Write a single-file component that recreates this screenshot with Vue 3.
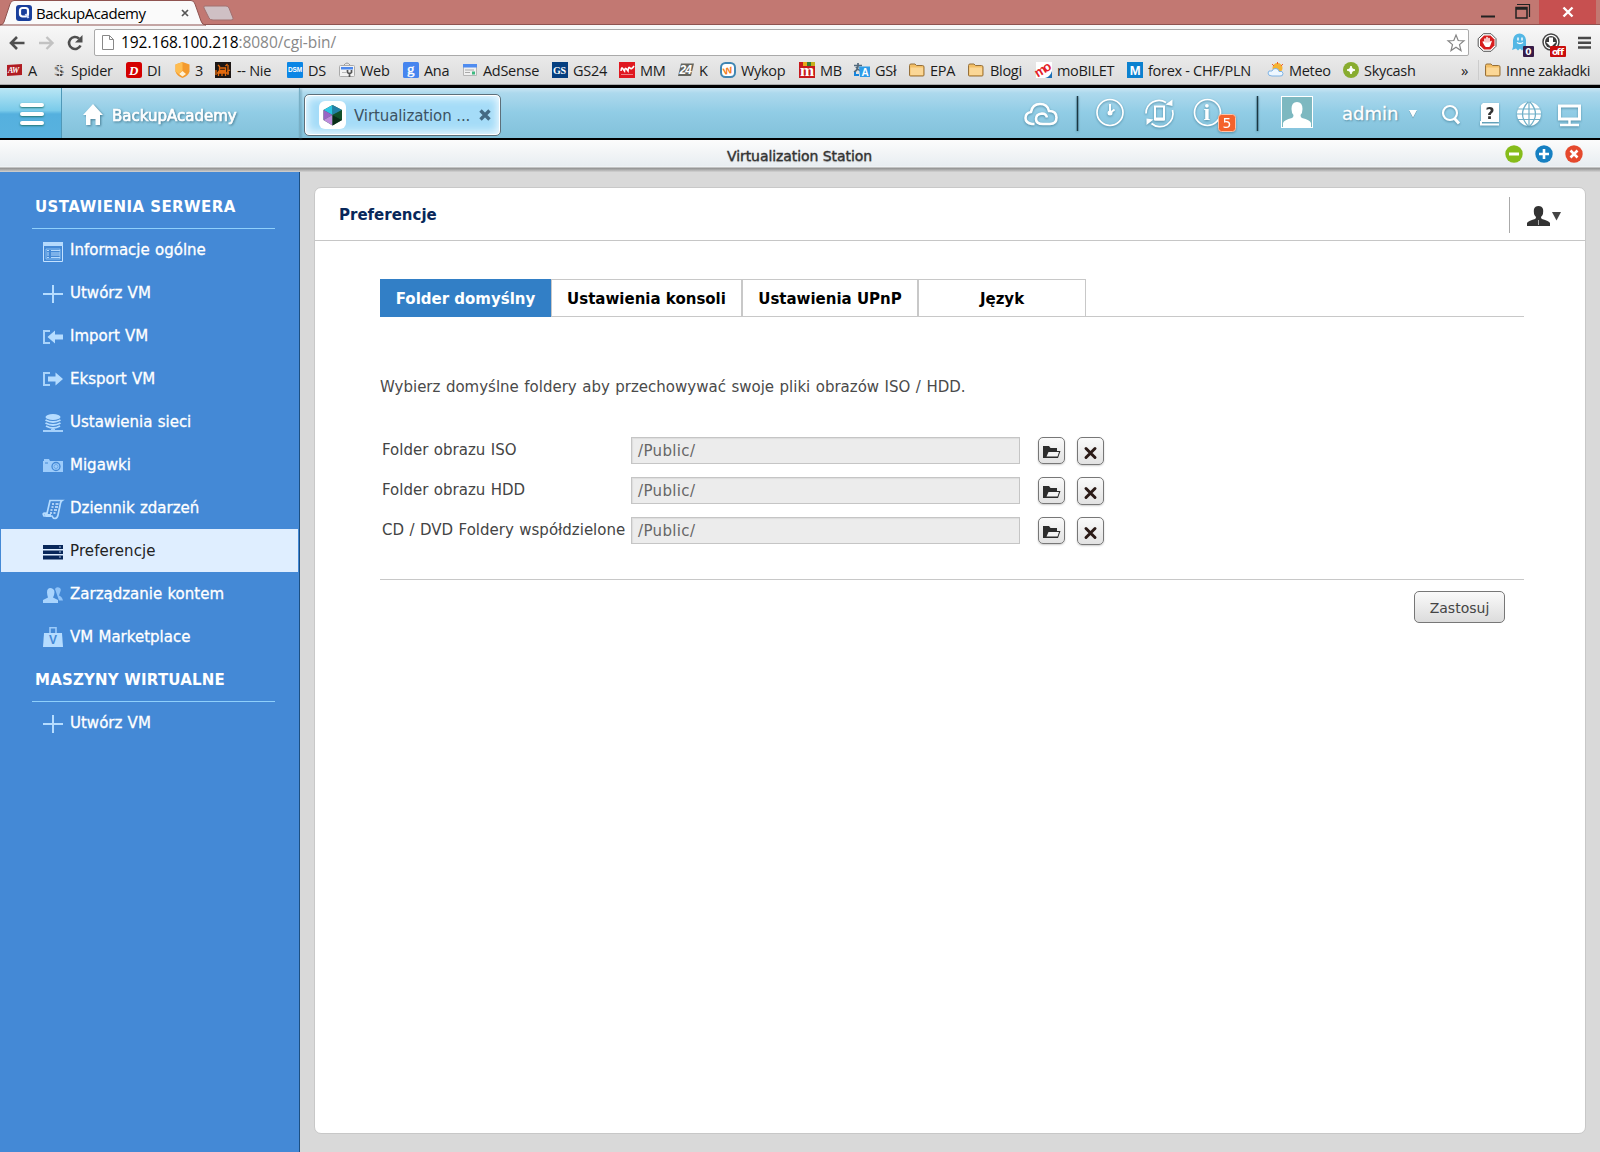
<script setup>
const folder = '<path d="M.5 3.500q0-1.500 1.500-1.500h4l1.500 1.500h6q1.500 0 1.500 1.500v8q0 1-1 1h-12.500q-1 0-1-1z" fill="#f3bf66" stroke="#96703a"/><path d="M1.500 5.500h12.500v7.500h-12.500z" fill="#fbd796"/>'

const bookmarks = [
  { label: 'A', w: 45, gap: 5, art: '<path d="M0 3l15-1v11l-15 1z" fill="#b01c22"/><text x="1" y="11" font-size="8" font-weight="700" font-style="italic" font-family="Liberation Serif" fill="#fff" letter-spacing="-.5">AW</text>' },
  { label: 'Spider', w: 74, gap: 3, art: '<text x="2" y="14" font-size="17" font-weight="700" font-family="Liberation Mono" fill="#444">S</text><path d="M0 4.500h13M0 8h13M0 11.500h13M4 0v16M7.500 0v16M11 0v16" stroke="#e3e3e3" stroke-width=".8"/>' },
  { label: 'DI', w: 49, gap: 5, art: '<rect width="16" height="16" rx="2.500" fill="#d40000"/><text x="3" y="13" font-size="13" font-weight="700" font-style="italic" font-family="Liberation Serif" fill="#fff">D</text>' },
  { label: '3', w: 40, gap: 4, art: '<path d="M7.500 0l7 2.500v7q-1 4-7 6.500q-6-2.500-7-6.500v-7z" fill="#f39a2d"/><path d="M7.500 0l-7 2.500v7l3 2.500 4-3.500z" fill="#ffbd50"/><path d="M4 12l3.500-3 3.500 3-3.500 2.500z" fill="#fff2d6"/>' },
  { label: '-- Nie', w: 72, gap: 6, art: '<rect width="16" height="16" fill="#1d1715"/><path d="M1 13V8M3.500 14V9.500h7V14M13 13V3M15 8l-3 1.500M4.500 6h6v2.500h-6zM3 3l2 2M10.500 4l2-2M7 9v5M2 11h12" fill="none" stroke="#e46a0d" stroke-width="1.300"/>' },
  { label: 'DS', w: 52, gap: 5, art: '<rect width="16" height="16" rx="1" fill="#0b86e5"/><text x="1" y="10" font-size="6.500" font-weight="700" font-family="Liberation Sans" fill="#fff" letter-spacing="-.2">DSM</text>' },
  { label: 'Web', w: 64, gap: 5, art: '<path d="M5 3q3-4 6 0" fill="none" stroke="#999"/><rect x=".5" y="3.500" width="15" height="11" rx="1" fill="#f3f3f3" stroke="#aaa"/><path d="M2 5h12v2.500H2z" fill="#4d88ec"/><path d="M3 10h4v1H3z" fill="#bbb"/><path d="M8.500 8v2.500q2 2 4 0V8M10.500 11.500V15" fill="none" stroke="#555" stroke-width="1.700"/>' },
  { label: 'Ana', w: 60, gap: 5, art: '<rect width="16" height="16" rx="1.500" fill="#4685ef"/><text x="4" y="12" font-size="15" font-family="Liberation Serif" fill="#fff" stroke="#fff" stroke-width=".4">g</text>' },
  { label: 'AdSense', w: 89, gap: 4, art: '<path d="M.5 2.500h13v11H.5z" fill="#f0f0f0" stroke="#b5b5b5"/><path d="M0 2h14v3.500H0z" fill="#4f8cf0"/><path d="M2 8h9M2 10.500h5" stroke="#aaa"/><path d="M9 9.500h3v3H9z" fill="#3db980"/>' },
  { label: 'GS24', w: 67, gap: 5, art: '<rect width="16" height="16" fill="#053f80"/><text x="1" y="12" font-size="10" font-weight="700" font-family="Liberation Serif" fill="#fff">GS</text>' },
  { label: 'MM', w: 59, gap: 5, art: '<rect width="16" height="16" fill="#e01820"/><path d="M2 9q.5-5 2-2l1.500 2q.5-4 2-2L9 9q.5-5 2-3t4-2" fill="none" stroke="#fff" stroke-width="1.600"/><path d="M2 12.500h12" stroke="#ee8084"/>' },
  { label: 'K', w: 42, gap: 5, art: '<path d="M3 1.500h13l-3 12.500H0z" fill="#66665f"/><text x="1.500" y="12" font-size="12" font-weight="700" font-style="italic" font-family="Liberation Sans" fill="#fff" letter-spacing="-1">24</text>' },
  { label: 'Wykop', w: 79, gap: 5, art: '<rect x="1" y="1" width="14" height="14" rx="4.500" fill="#fff" stroke="#4086b3" stroke-width="2"/><text x="3" y="12" font-size="12" font-weight="700" font-family="Liberation Sans" fill="#f47e22" transform="rotate(-14 8 8)">w</text>' },
  { label: 'MB', w: 55, gap: 5, art: '<rect width="16" height="16" fill="#c7191c"/><path d="M4 0h4v4H4z" fill="#e8a719"/><path d="M8 0h4v4H8z" fill="#327b35"/><path d="M12 0h4v4h-4z" fill="#c5b01d"/><text x="1" y="14" font-size="17" font-weight="700" font-family="Liberation Serif" fill="#fff">m</text>' },
  { label: 'GSł', w: 55, gap: 5, art: '<path d="M0 3.500h8M4 1v3q0 4-4 6M2 5q2 3 5 4" fill="none" stroke="#51687b" stroke-width="1.700"/><path d="M5 4.500h11V15H6z" fill="#2d9be8"/><path d="M1 10v3h4" fill="none" stroke="#1785dc" stroke-width="2"/><text x="7.500" y="13.500" font-size="10" font-weight="700" font-family="Liberation Sans" fill="#fff">A</text>' },
  { label: 'EPA', w: 59, gap: 5, art: folder },
  { label: 'Blogi', w: 68, gap: 6, art: folder },
  { label: 'moBILET', w: 91, gap: 5, art: '<rect width="16" height="16" fill="#fff"/><path d="M16 9v7H9q5-1 7-7z" fill="#1b70b6"/><text x="0" y="14" font-size="13" font-weight="700" font-family="Liberation Sans" fill="#e41e28" letter-spacing="-2" transform="rotate(-32 4 12)">mo</text>' },
  { label: 'forex - CHF/PLN', w: 141, gap: 5, art: '<rect width="16" height="16" fill="#0b81cf"/><text x="2.700" y="12.500" font-size="13" font-weight="700" font-family="Liberation Sans" fill="#fff">M</text>' },
  { label: 'Meteo', w: 75, gap: 5, art: '<circle cx="9.500" cy="6" r="5" fill="#f5b332"/><path d="M9.500 0v2M4 2l2 2M15 2l-2 2" stroke="#ee5c2b"/><path d="M4 14q-4 0-4-3t4-2q1-3 4-2.500t3 3q4-1 4 2t-3 2.500z" fill="#eef7ff" stroke="#7eb3e5"/>' },
  { label: 'Skycash', w: 75, gap: 5, art: '<circle cx="8" cy="8" r="8" fill="#88ac2f"/><path d="M8 4l1.200 2.800L12 8 9.200 9.200 8 12 6.800 9.200 4 8l2.800-1.200z" fill="#fff" stroke="#fff"/>' },
]

const plus = '<path d="M10 1v18M0 10h20" stroke="#b5dcff" stroke-width="2"/>'
const menu = [
  { label: 'Informacje ogólne', dy: 2, art: '<path d="M.5.5h19v19H.5z" fill="none" stroke="#c4e2ff"/><path d="M0 0h20v4H0z" fill="#b5dafd"/><path d="M3 7h14v10H3z" fill="none" stroke="#a3d3fa" stroke-width=".7"/><path d="M4 8.500h2m2 0h9M4 11h2m2 0h9M4 13h2m2 0h9M4 15.500h2m2 0h9" stroke="#b5dafd"/>' },
  { label: 'Utwórz VM', dy: 1, art: plus },
  { label: 'Import VM', dy: 1, art: '<path d="M7 4H1v12h6" fill="none" stroke="#a9d3fa" stroke-width="2"/><path d="M4.500 10L12 3.500V7.500h8v5h-8v4z" fill="#b5dcff"/>' },
  { label: 'Eksport VM', dy: 0, art: '<path d="M7 4H1v12h6" fill="none" stroke="#a9d3fa" stroke-width="2"/><path d="M20 10l-7.500-6.500v4H5v5h7.500v4z" fill="#b5dcff"/>' },
  { label: 'Ustawienia sieci', dy: 1, art: '<ellipse cx="10" cy="4" rx="7.500" ry="3" fill="#b5dcff"/><path d="M2.500 7q7.500 4 15 0M2.500 10q7.500 4 15 0M3 13q7 4 14 0" fill="none" stroke="#b5dcff" stroke-width="1.900"/><path d="M0 18h20M8 17h4" stroke="#a5d0fa" stroke-width="1.800"/>' },
  { label: 'Migawki', dy: 0, art: '<path d="M1 4h5l1 2h13v11H0V6h1z" fill="#9dccfb"/><circle cx="13" cy="11.500" r="4" fill="none" stroke="#4489d6" stroke-width="1.300"/><circle cx="13" cy="11.500" r="2" fill="none" stroke="#6ba8e7"/><path d="M2 8h3" stroke="#4489d6"/>' },
  { label: 'Dziennik zdarzeń', dy: 1, art: '<path d="M7 1.500h12q-1.500 1-2 5L15 16q-.5 3-3 3.500-2 0-3-2.500l-8 0q-2-3 1-3l2 .5z" fill="none" stroke="#b5dcff" stroke-width="1.700"/><path d="M9 5h2m1.500 0h3M8.500 8h2m1.500 0h3M7.500 11h2m1.500 0h3M7 14h2m1.500 0h2" stroke="#cfe7ff" stroke-width="1.700"/><path d="M1 15h7v3H3z" fill="#b5dcff"/>' },
  { label: 'Preferencje', active: true, dy: 1, art: '<path d="M0 3h20v4H0zM0 8.500h20v3.500H0zM0 13.500h20v4H0z" fill="#08275a"/><path d="M16 5h2M16 10h2M16 15h2" stroke="#a7c0df" stroke-width="1.200"/>' },
  { label: 'Zarządzanie kontem', dy: 1, art: '<path d="M12 4q1-2.500 4-1.500t1 5l-1 3q3 1 4 5h-4z" fill="#8fc3f8"/><path d="M0 18v-3l5-2.500Q3 6 5 4t5 0 0 8.500l5 2.500v3z" fill="#a9d4fd"/>' },
  { label: 'VM Marketplace', dy: 0, art: '<path d="M7 6V.8h6V6" fill="none" stroke="#9ccbfa" stroke-width="1.600"/><path d="M1 6h18l1 14H0z" fill="#b5dcff"/><text x="6" y="17" font-size="12" font-weight="700" font-family="Liberation Sans" fill="#4489d6">V</text>' },
]
const tabs = [
  { label: 'Folder domyślny', w: 172, active: true },
  { label: 'Ustawienia konsoli', w: 190 },
  { label: 'Ustawienia UPnP', w: 176 },
  { label: 'Język', w: 168 },
]
const folders = ['Folder obrazu ISO', 'Folder obrazu HDD', 'CD / DVD Foldery współdzielone']
</script>

<template>
  <div class="screen">
    <header class="titlebar">
      <svg class="tabshape" width="236" height="25" viewBox="0 0 236 25">
        <path d="M0 25q3 0 4-3L10 4q1-3.500 4-3.500h177q3 0 4 3.500l6 17q1 4 5 4z" fill="#fafafa" stroke="#8f5350" />
        <path d="M205 6h21q2 0 3 2l4 10q1 2-2 2h-18q-3 0-4-2l-5-10q-1-2 1-2z" fill="#cfc0c4" stroke="#a2706f" />
      </svg>
      <div class="browsertab">
        <svg width="16" height="16" viewBox="0 0 16 16"><rect width="16" height="16" rx="3" fill="#193f9c" /><rect x="4" y="3" width="8" height="8.500" rx="2.500" fill="none" stroke="#fff" stroke-width="2.200" /><path d="M9.500 9l3 4" stroke="#d3e0ff" stroke-width="2" /></svg>
        <span class="ui tabname">BackupAcademy</span>
        <svg width="8" height="8" viewBox="0 0 8 8"><path d="M1 1l6 6M7 1L1 7" stroke="#555" stroke-width="1.700" /></svg>
      </div>
      <div class="winctl">
        <svg width="60" height="24" viewBox="0 0 60 24"><path d="M0 16.500h14" stroke="#222" stroke-width="2" /><path d="M35 7.500h11v10.500H35zM35 9h11" fill="none" stroke="#222" stroke-width="1.500" /><path d="M36 4.500h12.500V17" fill="none" stroke="#222" stroke-width="1.200" /></svg>
        <div class="winclose"><svg width="12" height="10" viewBox="0 0 12 10"><path d="M1.500.5l9 9m0-9l-9 9" stroke="#fff" stroke-width="2.400" /></svg></div>
      </div>
    </header>

    <div class="toolbar">
      <svg class="nav" width="76" height="20" viewBox="0 0 76 20">
        <path d="M15.500 10H2.500M8 4L2 10l6 6" fill="none" stroke="#4e4e4e" stroke-width="2.600" />
        <path d="M30 10h13M37.500 4l6 6-6 6" fill="none" stroke="#c2c2c2" stroke-width="2.400" />
        <path d="M71.500 12.500A6 6 0 1 1 70 5.500" fill="none" stroke="#4e4e4e" stroke-width="2.600" /><path d="M73.500 2v7.500H66z" fill="#4e4e4e" />
      </svg>
      <div class="address">
        <svg width="12" height="15" viewBox="0 0 12 15"><path d="M.5.5h7l4 4v10H.5zM7.500.5v4h4" fill="#fff" stroke="#888" /></svg>
        <span class="ui url">192.168.100.218<i>:8080/cgi-bin/</i></span>
        <svg class="star" width="18" height="18" viewBox="0 0 18 18"><path d="M9 1l2.200 5.500 5.800.3-4.500 3.800 1.500 6L9 13.300l-5 3.300 1.500-6L1 6.800l5.800-.3z" fill="#fff" stroke="#858585" stroke-width="1.200" /></svg>
      </div>
      <svg class="exts" width="116" height="28" viewBox="0 0 116 28">
        <path d="M6.500.7h7.500l5 5v7.600l-5 5H6.500l-5.300-5V5.700z" fill="#fff" stroke="#555" /><path d="M7 2.500h6.500l4 4v6l-4 4H7l-4-4v-6z" fill="#d71c1c" /><path d="M8 6v5M10 4.500v6M12 5.500v5M6.300 9l2 3.500M14 8.500l-1.500 4" stroke="#fff" stroke-width="1.500" stroke-linecap="round" /><path d="M7.500 9.500h6L12.500 14h-4z" fill="#fff" />
        <path d="M35 17l1-3V7q1-6.500 6.500-6.500T49 7v10l-2-1.500-2 2-2-2-2 2-2-2z" fill="#53b7e5" /><path d="M41 4.500v3m4-3v3m-5 2q3 2 6 0" stroke="#fff" stroke-width="1.500" fill="none" />
        <rect x="46" y="13" width="11" height="11" rx="1" fill="#371b47" /><text x="48.300" y="22" font-family="DejaVu Sans" font-size="9" font-weight="700" fill="#fff">0</text>
        <circle cx="74" cy="9" r="8" fill="#fff" stroke="#444" stroke-width="1.500" /><circle cx="74" cy="9" r="6" fill="#3b3b3b" /><path d="M72 4.500h4V9h3l-5 5-5-5h3z" fill="#fff" />
        <rect x="73" y="13" width="16" height="11" rx="1" fill="#c90d0d" /><text x="75" y="21.500" font-family="DejaVu Sans" font-size="9" font-weight="700" fill="#fff" textLength="12">off</text>
        <path d="M101 5h13M101 9.700h13M101 14.500h13" stroke="#484848" stroke-width="2.600" />
      </svg>
    </div>

    <div class="bookmarks ui">
      <div v-for="b in bookmarks" :key="b.label" class="bm" :style="{ width: b.w + 'px', gap: b.gap + 'px' }">
        <svg width="16" height="16" viewBox="0 0 16 16" v-html="b.art" /><span>{{ b.label }}</span>
      </div>
      <span class="more">»</span>
      <div class="bm other"><svg width="16" height="16" viewBox="0 0 16 16" v-html="folder" /><span>Inne zakładki</span></div>
    </div>

    <div class="qbar">
      <div class="burger"><i /><i /><i /></div>
      <div class="home">
        <svg width="20" height="22" viewBox="0 0 20 22"><path d="M10 0l10 11h-3v10h-4.500v-6h-5v6H3V11H0z" fill="#fff" /></svg>
        <b>BackupAcademy</b>
      </div>
      <div class="apptab">
        <svg width="27" height="28" viewBox="0 0 27 28"><rect width="27" height="28" rx="6" fill="#fff" /><path d="M13.500 4L23 9v10l-9.500 5.500L4.500 19V9z" fill="#276848" /><path d="M13.500 4L4.500 9l9 5z" fill="#2cc4e4" /><path d="M13.500 4L23 9l-9.500 5z" fill="#2380a8" /><path d="M4.500 9v10l9-5z" fill="#9864c5" /><path d="M4.500 19l9 5.500V14z" fill="#bd8bdc" /><path d="M23 9v10l-9.500-5z" fill="#12512b" /><path d="M13.500 14v10.500L23 19z" fill="#092d19" /></svg>
        <span>Virtualization ...</span>
        <svg class="appx" width="12" height="12" viewBox="0 0 12 12"><path d="M1.500 1.500l9 9m0-9l-9 9" stroke="#456a83" stroke-width="3.400" /></svg>
      </div>
      <div class="tray">
        <svg class="sh" width="240" height="44" viewBox="0 0 240 44">
          <path d="M10.500 28H8Q1.500 27 1.500 22t5.500-6q1.500-8 9-8t9 7q7.500 0 7.500 6.500T26 28h-7q-7 0-7-5t6-5.500q4 0 5 4" fill="none" stroke="#fff" stroke-width="2.600" />
          <path d="M53.500 0v35" stroke="#1b3742" stroke-width="1.500" />
          <circle cx="86" cy="16.500" r="13" fill="none" stroke="#fff" stroke-width="1.700" /><path d="M86 8v9l4.500-3.500" fill="none" stroke="#fff" stroke-width="2" /><circle cx="86" cy="17" r="2.500" fill="#fff" />
          <path d="M122 17.500a13 13 0 0 1 20-11M148.500 14a13 13 0 0 1-21 13.500" fill="none" stroke="#fff" stroke-width="1.700" /><path d="M148.500 3.500v6.500l-7-1.500zM122.500 29v-6.500l7 1z" fill="#fff" /><path d="M131 10.500h9v13h-9z" fill="none" stroke="#fff" stroke-width="2" /><path d="M131 23h9" stroke="#fff" stroke-width="3" />
          <circle cx="183.500" cy="16.500" r="13" fill="none" stroke="#fff" stroke-width="1.700" /><text x="179.500" y="24" font-family="Liberation Serif" font-size="24" font-weight="700" fill="#fff">i</text>
          <rect x="194.500" y="18.500" width="17" height="17" rx="3" fill="#f4632c" stroke="#ffc2a8" /><text x="198.500" y="32" font-family="DejaVu Sans" font-size="14" fill="#fff">5</text>
          <path d="M233.500 0v35" stroke="#1b3742" stroke-width="1.500" />
        </svg>
        <svg class="avatar" width="32" height="32" viewBox="0 0 32 32"><rect x=".5" y=".5" width="31" height="31" fill="#7db8c0" stroke="#fff" /><path d="M2 31v-4q1-3 9-5 1.500-.5 1.500-3-2-2-2-6 0-7 5.500-7t5.500 7q0 4-2 6 0 2.500 1.500 3 8 2 9 5v4z" fill="#fff" /></svg>
        <span class="admin">admin</span>
        <svg class="caret" width="8" height="8" viewBox="0 0 8 8"><path d="M0 0h8L4 7.500z" fill="#fff" /></svg>
        <svg class="sh right" width="142" height="28" viewBox="0 0 142 28">
          <circle cx="9" cy="12" r="7" fill="none" stroke="#fff" stroke-width="2.200" /><path d="M13.500 17.500l4.500 5" stroke="#fff" stroke-width="3" />
          <path d="M42 2h16v19H40V4z" fill="#fff" /><path d="M40 20v3.500h18" fill="none" stroke="#fff" stroke-width="2" /><text x="44.500" y="17.500" font-family="DejaVu Sans" font-size="16" font-weight="700" fill="#333" textLength="9" lengthAdjust="spacingAndGlyphs">?</text>
          <circle cx="88" cy="13" r="12" fill="#fff" /><path d="M88 1v24M77 8h22M76 13h24M77 18.500h22M87 1q-11 12 0 24M89 1q11 12 0 24" fill="none" stroke="#6eafc8" stroke-width="1.200" />
          <path d="M118.500 5h20v13h-20z" fill="none" stroke="#fff" stroke-width="3" /><path d="M128.500 18v5M119 24h19" stroke="#fff" stroke-width="2.500" />
        </svg>
      </div>
    </div>

    <div class="winbar">
      <span>Virtualization Station</span>
      <svg width="78" height="18" viewBox="0 0 78 18">
        <circle cx="9" cy="9" r="8.700" fill="#86bc1b" /><path d="M4 9h10" stroke="#fff" stroke-width="3" />
        <circle cx="39" cy="9" r="8.700" fill="#1680c2" /><path d="M34 9h10M39 4v10" stroke="#fff" stroke-width="2.600" />
        <circle cx="69" cy="9" r="8.700" fill="#e5492d" /><path d="M65.500 5.500l7 7m0-7l-7 7" stroke="#fff" stroke-width="2.600" />
      </svg>
    </div>

    <div class="main">
      <nav class="side">
        <h2>USTAWIENIA SERWERA</h2>
        <a v-for="m in menu" :key="m.label" :class="{ on: m.active }">
          <svg width="20" height="20" viewBox="0 0 20 20" :style="{ marginTop: m.dy * 2 + 'px' }" v-html="m.art" /><span>{{ m.label }}</span>
        </a>
        <h2 class="vms">MASZYNY WIRTUALNE</h2>
        <a><svg class="low" width="20" height="20" viewBox="0 0 20 20" v-html="plus" /><span>Utwórz VM</span></a>
      </nav>
      <section class="panel">
        <div class="phead">
          <h1>Preferencje</h1>
          <div class="user">
            <svg width="34" height="20" viewBox="0 0 34 20"><path d="M0 20v-3q1-2 8-4 1-.5 1-2Q6 8 7 3q1-3 4.500-3T16 3q1 5-2 8 0 1.500 1 2 7 2 8 4v3z" fill="#333" /><path d="M11.500 14v5" stroke="#aaa" /><path d="M25 6h9l-4.500 8.500z" fill="#444" /></svg>
          </div>
        </div>
        <div class="tabs"><div v-for="t in tabs" :key="t.label" class="tab" :class="{ on: t.active }" :style="{ width: t.w + 'px' }">{{ t.label }}</div></div>
        <p>Wybierz domyślne foldery aby przechowywać swoje pliki obrazów ISO / HDD.</p>
        <div class="form">
          <div v-for="f in folders" :key="f" class="row">
            <label>{{ f }}</label>
            <div class="field">/Public/</div>
            <div class="ib"><svg width="18" height="14" viewBox="0 0 18 14"><path d="M0 13V1h6l1.500 2H14v3h3.500L15 13z" fill="#2d2d2d" /><path d="M5.500 7h10.500l-1.500 4.500H3.500z" fill="#f4f4f4" /></svg></div>
            <div class="ib x"><svg width="13" height="12" viewBox="0 0 13 12"><path d="M2 1.500l9 9m0-9l-9 9" stroke="#2b1a16" stroke-width="3" stroke-linecap="round" /></svg></div>
          </div>
        </div>
        <div class="foot"><button>Zastosuj</button></div>
      </section>
    </div>
  </div>
</template>

<style>
body { overflow: hidden; }
</style>

<style scoped>
* { box-sizing: border-box; }
svg { display: block; flex: none; overflow: visible; }
.screen { width: 1600px; height: 1152px; display: flex; flex-direction: column; background: #d9d9d9; font-family: "DejaVu Sans", sans-serif; font-size: 15px; white-space: nowrap; overflow: hidden; }
.ui { font-family: "Open Sans", "Noto Sans", sans-serif; }
.titlebar { height: 25px; flex: none; background: #c27872; border-bottom: 1px solid #8f5350; display: flex; justify-content: space-between; position: relative; }
.tabshape { position: absolute; left: 0; top: 0; }
.browsertab { position: relative; display: flex; align-items: center; padding-left: 16px; height: 26px; }
.tabname { width: 145px; margin: -1px 0 0 4px; font-size: 15px; letter-spacing: -0.45px; }
.winctl { display: flex; margin-right: 4px; }
.winctl > svg { margin-right: -2px; }
.winclose { width: 57px; height: 24px; background: #c75050; display: flex; align-items: center; justify-content: center; }
.toolbar { height: 33px; flex: none; display: flex; background: linear-gradient(#f8f8f8, #e9e9e9); }
.nav { margin: 8px 9px 0 9px; }
.address { width: 1375px; height: 27px; margin-top: 4px; border: 1px solid #aaa; border-radius: 2px; background: #fff; display: flex; align-items: center; padding: 0 3px 0 7px; }
.url { margin: -2px 0 0 7px; font-size: 15.500px; letter-spacing: -.07px; }
.url i { font-style: normal; color: #888; }
.star { margin-left: auto; }
.exts { margin: 8px 0 0 8px; }
.bookmarks { height: 27px; flex: none; background: linear-gradient(#e9e9e9, #dcdcdc); border-bottom: 1px solid #aaa; display: flex; align-items: center; padding: 0 0 2px 7px; font-size: 14.500px; letter-spacing: -.3px; color: #1c1c1c; }
.bm { display: flex; align-items: center; flex: none; }
.more { width: 60px; padding-left: 43px; font-size: 15px; }
.other { border-left: 1px solid #ccc; gap: 5px; padding-left: 6px; height: 20px; }
.qbar { height: 55px; flex: none; border-top: 3px solid #000; border-bottom: 2px solid #000; background: linear-gradient(#c9e5f3 0, #add9ed 10%, #90cce5 50%, #83c1da 100%); display: flex; }
.burger { width: 62px; border-right: 1px solid #4f98b8; background: linear-gradient(#b9e6f5, #7acbea 45%, #55b0de 52%, #58b2df); display: flex; flex-direction: column; align-items: center; justify-content: center; gap: 5px; padding: 2px 0 0 2px; }
.burger i { width: 24px; height: 4px; border-radius: 2px; background: #fff; box-shadow: 0 1px 2px #277; }
.home { width: 238px; border-right: 1px solid #79afc5; display: flex; align-items: center; padding: 4px 0 0 21px; gap: 9px; color: #fff; filter: drop-shadow(1px 1px 1px #4b8198); }
.home b { margin-top: 1px; font-size: 15px; font-weight: 400; -webkit-text-stroke: .7px #fff; }
.apptab { width: 197px; height: 42px; margin: 6px 0 0 4px; border: 1px solid #5d6f7a; border-radius: 5px; background: #a5dcf8; box-shadow: inset 0 0 0 1px #fff, inset 0 0 9px 3px #edf9ff; display: flex; align-items: center; padding-left: 14px; color: #3c5262; }
.apptab span { width: 117px; margin: 2px 8px 0 8px; font-size: 15px; letter-spacing: -.1px; }
.tray { flex: none; display: flex; margin-left: 523px; padding-top: 7px; }
.sh { margin-top: 1px; filter: drop-shadow(0 1px 1px #538fa8); }
.avatar { margin: 1px 0 0 17px; }
.admin { margin: 8px 12px 0 29px; width: 55px; font-size: 18px; line-height: 22px; color: #fff; text-shadow: 1px 1px 2px #4b8198; -webkit-text-stroke: .3px #fff; }
.caret { margin-top: 15px; filter: drop-shadow(0 1px 0 #6699ad); }
.right { margin: 6px 0 0 24px; }
.winbar { height: 32px; flex: none; background: linear-gradient(#fcfcfc, #e8edf1 26px, #f5f7f8 27px, #8f8f8f 28px, #b0b0b0 30px, #d3d3d3); display: flex; justify-content: flex-end; padding-right: 17px; padding-top: 5px; }
.winbar span { width: 146px; margin-right: 632px; font-size: 14px; letter-spacing: -.07px; line-height: 22px; color: #333; -webkit-text-stroke: .3px #333; text-shadow: 0 1px 1px #aaa; }
.main { flex: 1; display: flex; }
.side { width: 300px; background: #4489d6; border-right: 1px solid #1c4f82; padding: 13px 1px 0 1px; }
h2 { height: 43px; width: 243px; margin: 0 0 0 31px; padding-left: 3px; font-size: 15px; line-height: 44px; letter-spacing: .44px; color: #fff; box-shadow: 0 1px 0 #8fd0fb; }
.vms { letter-spacing: .2px; }
.side a { display: flex; height: 43px; padding-left: 42px; align-items: center; gap: 7px; color: #fff; }
.side a span { margin-top: 1px; word-spacing: .5px; -webkit-text-stroke: .3px #fff; }
.side a.on { background: #dfeeff; color: #222; }
.side a.on span { -webkit-text-stroke: 0; letter-spacing: .1px; }
.low { margin-top: 2px; }
.panel { width: 1272px; height: 947px; margin: 15px 0 0 14px; background: #fff; border: 1px solid #c8c8c8; border-radius: 7px; }
.phead { height: 53px; border-bottom: 1px solid #c6c6c6; display: flex; justify-content: space-between; }
h1 { margin: 0 0 0 24px; font-size: 15px; line-height: 54px; color: #08275a; }
.user { width: 76px; height: 36px; margin-top: 9px; padding: 9px 0 0 17px; border-left: 1px solid #aaa; }
.tabs { margin: 38px 61px 0 65px; height: 38px; display: flex; border-bottom: 1px solid #c8c8c8; }
.tab { height: 38px; border: 1px solid #c8c8c8; border-left-width: 0; border-right-width: 1px; font-weight: 700; text-align: center; line-height: 39px; color: #000; }
.tab + .tab + .tab { border-left-width: 1px; }
.tab.on { background: #327fc6; color: #fff; border: 0 solid; line-height: 41px; border-right: 1px solid #c8c8c8; }
p { margin: 59px 0 0 65px; line-height: 22px; word-spacing: .73px; color: #4a4a4a; }
.form { margin-top: 39px; padding: 0 0 0 67px; display: flex; flex-direction: column; gap: 12px; }
.row { display: flex; height: 28px; color: #444; }
label { width: 249px; line-height: 27px; word-spacing: .7px; }
.field { width: 389px; height: 27px; border: 1px solid #c5c5c5; background: #ececec; box-shadow: inset 1px 1px 1px #ddd; padding-left: 6px; line-height: 27px; letter-spacing: .35px; color: #666; }
.ib { width: 27px; height: 27px; margin-left: 18px; border: 1px solid #777; border-radius: 5px; background: linear-gradient(#fafafa, #e2e2e2); box-shadow: 0 1px 2px #ccc; display: flex; align-items: center; justify-content: center; padding-top: 3px; }
.ib.x { height: 28px; margin-left: 12px; }
.foot { margin: 34px 61px 0 65px; border-top: 1px solid #c8c8c8; padding: 11px 19px 0 0; display: flex; justify-content: flex-end; }
button { width: 91px; height: 32px; padding: 2px 0 0; border: 1px solid #777; border-radius: 5px; background: linear-gradient(#fafafa, #dcdcdc); font: 14px "DejaVu Sans", sans-serif; color: #444; }
</style>
